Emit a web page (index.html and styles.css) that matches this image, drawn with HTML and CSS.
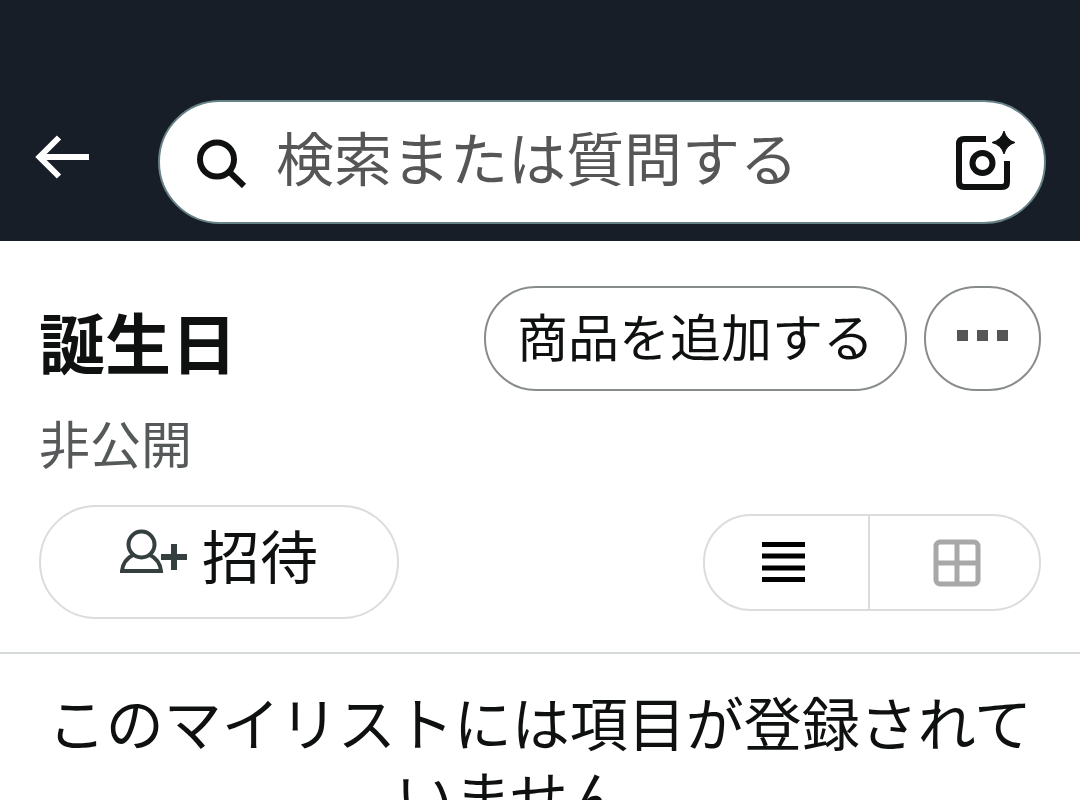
FILE: index.html
```html
<!doctype html>
<html lang="ja">
    <head>
        <meta charset="utf-8">
        <title>誕生日</title>
        <meta name="viewport" content="width=device-width, initial-scale=1">
        <link rel="stylesheet" href="styles.css">
    </head>
    <body>
        <header class="topbar">
            <button class="back" type="button" aria-label="戻る">
                <svg width="54" height="44" viewBox="0 0 54 44" fill="none" stroke="#fff" stroke-width="6">
                    <path d="M24 2.500 4.500 22 24 41.500M5 22H54"/>
                </svg>
            </button>
            <form class="search" role="search">
                <svg width="50" height="52" viewBox="0 0 50 52" fill="none" stroke="#0f1111" stroke-width="6">
                    <circle cx="20" cy="23.500" r="17"/>
                    <path d="M32 35.500 47 50"/>
                </svg>
                <input type="search" placeholder="検索または質問する" aria-label="検索または質問する">
                <button class="camera" type="button" aria-label="カメラ検索">
                    <svg width="60" height="62" viewBox="0 0 60 62" fill="none" stroke="#0f1111" stroke-width="6">
                        <path d="M31 8H9Q4 8 4 13V51Q4 56 9 56H47Q52 56 52 51V30"/>
                        <circle cx="27.500" cy="32" r="10"/>
                        <path d="M49 0Q51.500 9 60 11.500Q51.500 14 49 23Q46.500 14 37 11.500Q46.500 9 49 0Z" fill="#0f1111" stroke="#0f1111" stroke-width="1"/>
                    </svg>
                </button>
            </form>
        </header>
        <main>
            <section class="list-head">
                <div class="row">
                    <h1>誕生日</h1>
                    <div class="actions">
                        <button class="pill" type="button">商品を追加する</button>
                        <button class="pill more" type="button" aria-label="その他">
                            <svg width="51" height="12" viewBox="0 0 51 12" fill="#565656">
                                <path d="M0 0H11V11H0ZM20 0H31V11H20ZM40 0H51V11H40Z"/>
                            </svg>
                        </button>
                    </div>
                </div>
                <p class="privacy">非公開</p>
                <div class="row">
                    <button class="invite" type="button">
                        <svg width="68" height="44" viewBox="0 0 68 44" fill="none" stroke="#363f3f" stroke-width="4">
                            <circle cx="21.500" cy="15.500" r="13"/>
                            <path d="M13 26Q3 31 2 42H41Q40 31 30 26"/>
                            <path d="M41 28H67M54 15V41" stroke-width="6"/>
                        </svg>
                        招待
                    </button>
                    <div class="view-toggle">
                        <button class="view-list" type="button" aria-label="リスト表示" aria-pressed="true">
                            <svg width="43" height="42" viewBox="0 0 43 42" stroke="#000" stroke-width="5">
                                <path d="M0 3.500H43M0 15H43M0 27H43M0 38.500H43"/>
                            </svg>
                        </button>
                        <button class="view-grid" type="button" aria-label="グリッド表示" aria-pressed="false">
                            <svg width="48" height="50" viewBox="0 0 48 50" fill="none" stroke="#a8a8a8" stroke-width="5">
                                <rect x="3" y="5" width="42" height="42" rx="4"/>
                                <path d="M24 5V47M3 26H45"/>
                            </svg>
                        </button>
                    </div>
                </div>
            </section>
            <p class="empty">このマイリストには項目が登録されていません。</p>
        </main>
    </body>
</html>
```

FILE: styles.css
```css
* {
    box-sizing: border-box;
}
html {
    height: 100%;
    overflow: hidden;
}
body {
    margin: 0;
    background: #fff;
    color: #0f1111;
    font-family: "Noto Sans CJK JP", sans-serif;
    font-size: 58px;
    line-height: 74px;
}
button,
input {
    margin: 0;
    padding: 0;
    border: 0;
    background: none;
    color: inherit;
    font: inherit;
}
button {
    display: flex;
    align-items: center;
    justify-content: center;
    cursor: pointer;
}
svg {
    display: block;
    flex: none;
}
h1,
p {
    margin: 0;
}

/* top bar */
.topbar {
    display: flex;
    align-items: center;
    gap: 69px;
    padding: 100px 34px 17px 35px;
    background: #171e27;
}
.back {
    padding-bottom: 10px;
}
.search {
    display: flex;
    flex: 1;
    align-items: center;
    gap: 29px;
    min-width: 0;
    height: 124px;
    padding: 0 29px 0 37px;
    border: 2px solid #678286;
    border-radius: 62px;
    background: #fff;
}
.search input {
    flex: 1;
    min-width: 0;
    height: 100%;
    padding-bottom: 12px;
    outline: none;
    appearance: none;
}
.search input::placeholder {
    color: #565656;
    opacity: 1;
}

/* list title and controls */
.list-head {
    padding: 45px 39px 33px;
    border-bottom: 2px solid #d5d9d9;
}
.row {
    display: flex;
    align-items: center;
    justify-content: space-between;
}
h1 {
    padding-top: 2px;
    font-size: 66px;
    font-weight: 700;
}
.actions {
    display: flex;
    gap: 17px;
}
.pill {
    height: 105px;
    padding: 0 31px 8px;
    border: 2px solid #888c8c;
    border-radius: 52px;
    font-size: 51px;
}
.more {
    padding-bottom: 6px;
}
.privacy {
    padding: 14px 0 26px;
    color: #565959;
    font-size: 51px;
}
.invite {
    gap: 14px;
    width: 360px;
    height: 114px;
    padding-bottom: 16px;
    border: 2px solid #dcdcdc;
    border-radius: 57px;
}
.invite svg {
    margin-bottom: 6px;
}
.view-toggle {
    display: flex;
    height: 97px;
    border: 2px solid #dcdcdc;
    border-radius: 48px;
}
.view-list {
    padding: 0 63px 0 57px;
    border-right: 2px solid #dcdcdc;
}
.view-grid {
    padding: 0 58px 0 63px;
}

.empty {
    padding: 30px 39px;
    text-align: center;
}
```
